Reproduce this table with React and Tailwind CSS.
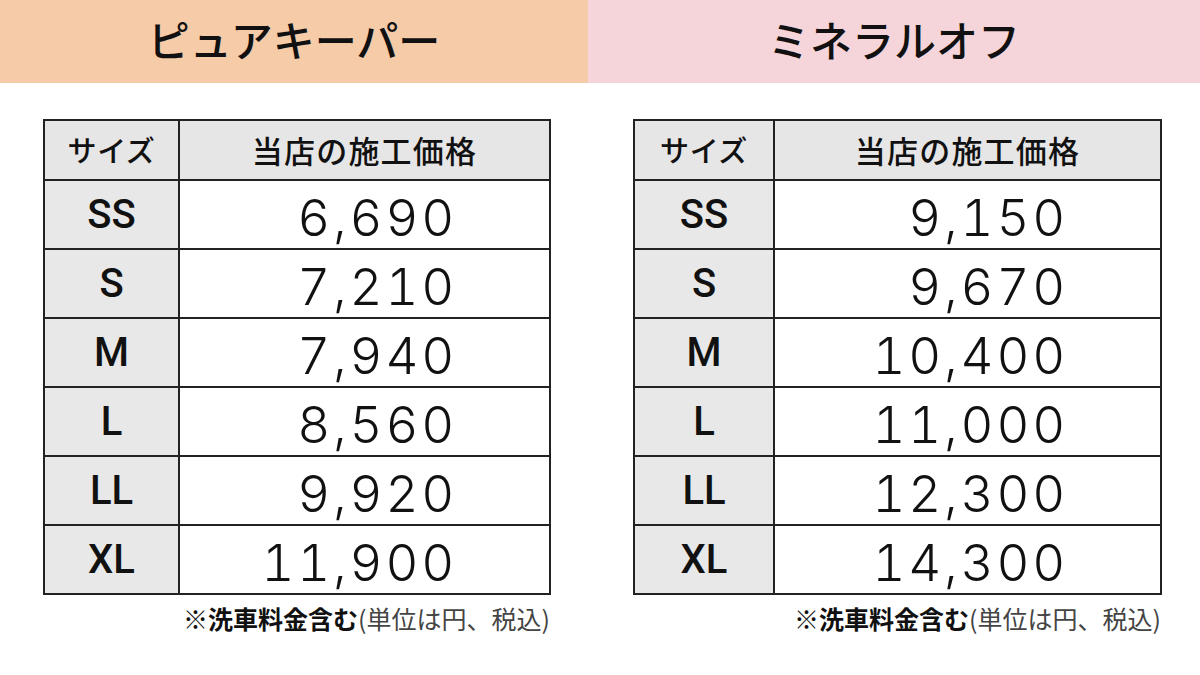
const jp = { fontFamily: '"Noto Sans CJK JP", "Noto Sans", sans-serif' };

const pureKeeper = [
  ["SS", "6,690"],
  ["S", "7,210"],
  ["M", "7,940"],
  ["L", "8,560"],
  ["LL", "9,920"],
  ["XL", "11,900"],
];

const mineralOff = [
  ["SS", "9,150"],
  ["S", "9,670"],
  ["M", "10,400"],
  ["L", "11,000"],
  ["LL", "12,300"],
  ["XL", "14,300"],
];

function PriceTable({ rows, width, sizeCol }) {
  return (
    <div className={width}>
      <table className="w-full border-collapse border-2 border-[#222]">
        <thead>
          <tr className="h-[60px] bg-[#e6e6e6]">
            <th
              className={`${sizeCol} border-2 border-[#222] text-[29px] font-medium text-[#111] tracking-[0.02em]`}
              style={jp}
            >
              サイズ
            </th>
            <th className="border-2 border-[#222] text-[31px] font-medium text-[#111] tracking-[0.04em]" style={jp}>
              当店の施工価格
            </th>
          </tr>
        </thead>
        <tbody>
          {rows.map(([size, price]) => (
            <tr key={size} className="h-[69px]">
              <td className="border-2 border-[#222] bg-[#e8e8e8] text-center font-['Roboto',sans-serif] font-medium text-[40px] text-[#111]">
                {size}
              </td>
              <td className="border-2 border-[#222] bg-white text-right pr-[92px] pt-[6px] font-['Inter',sans-serif] font-light tabular-nums text-[51px] leading-none tracking-[0.055em] text-[#111]">
                {price}
              </td>
            </tr>
          ))}
        </tbody>
      </table>
      <p className="mt-[11px] text-right text-[25px] leading-none pr-[1px]" style={jp}>
        <span className="font-bold text-[#111]">※洗車料金含む</span>
        <span className="text-[#444]">(単位は円、税込)</span>
      </p>
    </div>
  );
}

export default function App() {
  return (
    <div className="w-[1200px] h-[675px] bg-white overflow-hidden">
      <div className="flex h-[83px]">
        <div className="w-[588px] bg-[#f6cba8] flex items-center justify-center">
          <h1 className="text-[42px] font-medium text-[#111] pb-[6px]" style={jp}>
            ピュアキーパー
          </h1>
        </div>
        <div className="flex-1 bg-[#f6d5da] flex items-center justify-center">
          <h1 className="text-[42px] font-medium text-[#111] pb-[6px]" style={jp}>
            ミネラルオフ
          </h1>
        </div>
      </div>
      <div className="flex pt-[36px]">
        <div className="w-[588px] pl-[43px]">
          <PriceTable rows={pureKeeper} width="w-[508px]" sizeCol="w-[135px]" />
        </div>
        <div className="flex-1 pl-[45px]">
          <PriceTable rows={mineralOff} width="w-[529px]" sizeCol="w-[140px]" />
        </div>
      </div>
    </div>
  );
}
